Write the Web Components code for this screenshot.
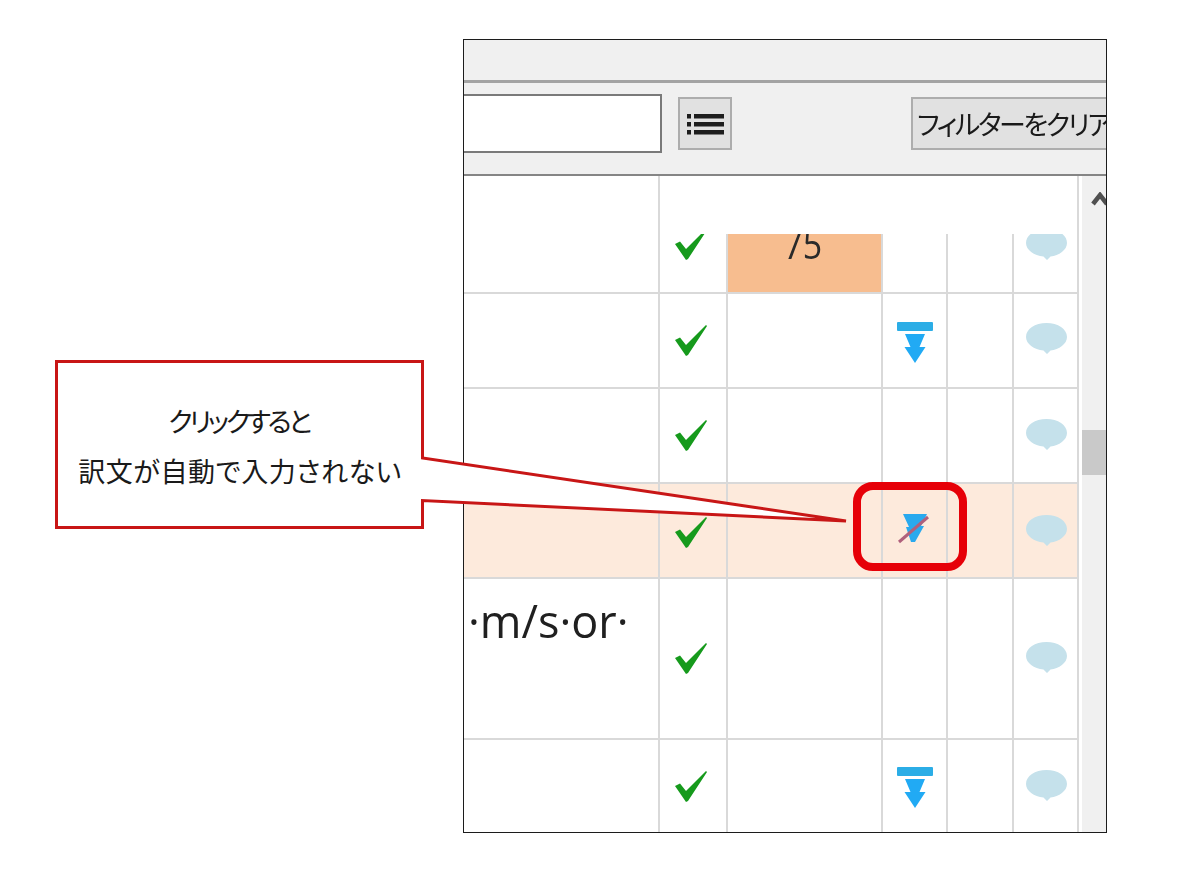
<!DOCTYPE html>
<html lang="ja">
<head>
<meta charset="utf-8">
<title>フィルターをクリア</title>
<style>
  html, body { margin: 0; background: #fff; }
  body { width: 1200px; height: 877px; overflow: hidden; font-family: "Noto Sans CJK JP", sans-serif; }
</style>
</head>
<body>
<annotated-page>
  <app-frame>
    <title-strip></title-strip>
    <tool-bar></tool-bar>
    <segment-grid>
      <segment-row height="60" icon-top="-5" bubble-top="-5" fill="75"></segment-row>
      <segment-row height="95" icon-top="31" bubble-top="29" filter-top="28" filter="bar"></segment-row>
      <segment-row height="95" icon-top="31" bubble-top="30"></segment-row>
      <segment-row height="95" icon-top="33" bubble-top="31" filter-top="30" filter="off" active></segment-row>
      <segment-row height="161" icon-top="64" bubble-top="63" text="·m/s·or·"></segment-row>
      <segment-row height="92" icon-top="31" bubble-top="30" filter-top="27" filter="bar" last></segment-row>
    </segment-grid>
  </app-frame>
  <call-out>
    <span slot="first">クリックすると</span>
    <span slot="second">訳文が自動で入力されない</span>
  </call-out>
  <focus-ring></focus-ring>
</annotated-page>

<script>
// small helper, every element gets an open shadow root from its own markup
class ShadowBase extends HTMLElement {
  constructor() {
    super();
    this.attachShadow({ mode: "open" });
  }
  connectedCallback() {
    this.render();
  }
}

class AnnotatedPage extends ShadowBase {
  render() {
    this.shadowRoot.innerHTML = `
      <style>
        :host { display: block; position: relative; width: 1200px; height: 877px; padding: 39px 0 0 463px; box-sizing: border-box; }
      </style>
      <slot></slot>
    `;
  }
}

class AppFrame extends ShadowBase {
  render() {
    this.shadowRoot.innerHTML = `
      <style>
        :host {
          display: flex; flex-direction: column; width: 644px; height: 794px; box-sizing: border-box;
          border: 1px solid #1c1c1c; overflow: hidden; background: #fff; filter: blur(0.35px);
        }
      </style>
      <slot></slot>
    `;
  }
}

class TitleStrip extends ShadowBase {
  render() {
    this.shadowRoot.innerHTML = `
      <style>
        :host { display: block; flex: none; height: 40px; background: #f0f0f0; border-bottom: 3px solid #a3a3a3; }
      </style>
    `;
  }
}

class ToolBar extends ShadowBase {
  render() {
    this.shadowRoot.innerHTML = `
      <style>
        :host {
          display: flex; flex: none; height: 91px; background: #f0f0f0; border-bottom: 2px solid #858585;
          align-items: flex-start; font-family: "Noto Sans CJK JP", sans-serif;
        }
        .search {
          flex: none; width: 198px; height: 59px; margin-top: 11px; box-sizing: border-box; background: #fff;
          border: 2px solid #7a7a7a; border-left: 0;
        }
        .btn {
          flex: none; margin-top: 14px; height: 53px; box-sizing: border-box; background: #e1e1e1;
          border: 2px solid #adadad; display: flex; align-items: center;
        }
        .list { width: 54px; margin-left: 16px; justify-content: center; }
        .clear {
          width: 240px; margin-left: 179px; padding-left: 4px; border-right: 0;
          font-size: 27px; letter-spacing: -2.4px; color: #1a1a1a; white-space: nowrap; font-feature-settings: "palt";
        }
      </style>
      <div class="search"></div>
      <div class="btn list">
        <svg width="40" height="30" viewBox="0 0 40 30">
          <g fill="#1d1d1d">
            <rect x="2" y="5" width="4" height="4.500"/><rect x="2" y="13" width="4" height="4.500"/><rect x="2" y="21" width="4" height="4.500"/>
            <rect x="9" y="5" width="30" height="4.500"/><rect x="9" y="13" width="30" height="4.500"/><rect x="9" y="21" width="30" height="4.500"/>
          </g>
        </svg>
      </div>
      <div class="btn clear">フィルターをクリア</div>
    `;
  }
}

class SegmentGrid extends ShadowBase {
  render() {
    this.shadowRoot.innerHTML = `
      <style>
        :host { display: flex; flex: 1; min-height: 0; }
        .rows { flex: none; width: 615px; display: flex; flex-direction: column; }
        .head {
          flex: none; height: 58px; display: grid; grid-template-columns: 196px 419px;
        }
        .head div { border-right: 2px solid #d9d9d9; }
        .bar { flex: 1; margin-left: 3px; background: #f0f0f0; display: flex; flex-direction: column; align-items: center; }
        .up { margin-top: 16px; margin-left: 9px; flex: none; }
        .thumb { margin-top: 224px; width: 100%; height: 45px; background: #c9c9c9; }
      </style>
      <div class="rows">
        <div class="head"><div></div><div></div></div>
        <slot></slot>
      </div>
      <div class="bar">
        <svg class="up" width="18" height="14" viewBox="0 0 18 14"><path d="M2 12 L9 3 L16 12" fill="none" stroke="#505050" stroke-width="4.500"/></svg>
        <div class="thumb"></div>
      </div>
    `;
  }
}

const CHECK = `<svg width="32" height="31" viewBox="0 0 32 31"><path d="M0 15 L5 12.500 L11 20 L31 0 L32 1 L13 30 L11 31 Z" fill="#169a1c"/></svg>`;
const BUBBLE = `<svg width="41" height="31" viewBox="0 0 41 31"><path d="M20.500 0 C32 0 41 6 41 14 C41 21 33 26.500 24.500 27.500 L21 31 L17.500 27.500 C8 26.500 0 21 0 14 C0 6 9 0 20.500 0 Z" fill="#c5e1eb"/></svg>`;
const FILTER_BAR = `<svg width="36" height="41" viewBox="0 0 36 41">
  <rect x="0" y="0" width="36" height="9" rx="1" fill="#2bade6"/>
  <path d="M8 12 H28 L22.500 25 H28.500 L18 41 L7.500 25 H13.500 Z" fill="#21aaf4"/></svg>`;
const FILTER_OFF = `<svg width="32" height="30" viewBox="0 0 32 30">
  <path d="M5 0 H29 L23 12 H26 L17 28 H13 L8 13 H11 Z" fill="#29a9ee"/>
  <path d="M1 28 L30 3" stroke="#b0607c" stroke-width="3"/></svg>`;

class SegmentRow extends ShadowBase {
  render() {
    const height = this.getAttribute("height");
    const iconTop = this.getAttribute("icon-top");
    const bubbleTop = this.getAttribute("bubble-top");
    const filterTop = this.getAttribute("filter-top") || 0;
    const filter = this.getAttribute("filter");
    const fill = this.getAttribute("fill");
    const text = this.getAttribute("text") || "";
    this.shadowRoot.innerHTML = `
      <style>
        :host {
          display: grid; flex: none; height: ${height}px; box-sizing: border-box;
          grid-template-columns: 196px 68px 155px 65px 66px 65px;
          border-bottom: ${this.hasAttribute("last") ? 0 : 2}px solid #d9d9d9;
          background: ${this.hasAttribute("active") ? "#fdeadc" : "#fff"};
        }
        .cell { border-right: 2px solid #d9d9d9; overflow: hidden; min-width: 0; display: flex; justify-content: center; align-items: flex-start; }
        svg { display: block; flex: none; }
        .src {
          justify-content: flex-start; padding: 16px 0 0 4px; font: 45px/52px "Open Sans", sans-serif; color: #202020; white-space: nowrap;
        }
        .check svg { margin: ${iconTop}px 4px 0 0; }
        .score { font: 40px/44px "Open Sans", sans-serif; color: #2a2a2a; }
        .score.orange { background: #f7bd8f; }
        .score span { display: block; margin-top: -12px; margin-right: 3px; transform: scaleX(.85); }
        .filter svg { margin: ${filterTop}px 0 0 0; }
        .filter.off svg { margin: ${filterTop}px 0 0 -2px; }
        .note svg { margin: ${bubbleTop}px 0 0 2px; }
      </style>
      <div class="cell src">${text}</div>
      <div class="cell check">${CHECK}</div>
      <div class="cell score ${fill ? "orange" : ""}">${fill ? `<span>${fill}</span>` : ""}</div>
      <div class="cell filter ${filter === "off" ? "off" : ""}">${filter === "bar" ? FILTER_BAR : filter === "off" ? FILTER_OFF : ""}</div>
      <div class="cell"></div>
      <div class="cell note">${BUBBLE}</div>
    `;
  }
}

// callout box with its wedge, lies over the grid
class CallOut extends ShadowBase {
  render() {
    this.shadowRoot.innerHTML = `
      <style>
        :host { position: absolute; left: 55px; top: 360px; width: 795px; height: 170px; display: block; }
        svg { position: absolute; inset: 0; }
        .text {
          position: absolute; left: 1px; top: 1px; width: 368px; height: 167px; box-sizing: border-box; padding-top: 3px;
          display: flex; flex-direction: column; align-items: center; justify-content: center; gap: 12px;
          font-family: "Noto Sans CJK JP", sans-serif; font-weight: 400; color: #1a1a1a; font-feature-settings: "palt";
          line-height: 38px;
        }
        .one { font-size: 27px; letter-spacing: -3.4px; margin-right: 3px; }
        .two { font-size: 27px; letter-spacing: 0.6px; }
      </style>
      <svg width="795" height="170" viewBox="0 0 795 170">
        <path d="M1.500 1.500 H367.500 V98 L791 161 L367.500 140.500 V167.500 H1.500 Z" fill="#fff" stroke="#c81616" stroke-width="3"/>
      </svg>
      <div class="text">
        <div class="one"><slot name="first"></slot></div>
        <div class="two"><slot name="second"></slot></div>
      </div>
    `;
  }
}

class FocusRing extends ShadowBase {
  render() {
    this.shadowRoot.innerHTML = `
      <style>
        :host {
          position: absolute; left: 853px; top: 482px; width: 114px; height: 89px; box-sizing: border-box;
          border: 8px solid #e60008; border-radius: 20px; display: block;
        }
      </style>
    `;
  }
}

customElements.define("annotated-page", AnnotatedPage);
customElements.define("app-frame", AppFrame);
customElements.define("title-strip", TitleStrip);
customElements.define("tool-bar", ToolBar);
customElements.define("segment-grid", SegmentGrid);
customElements.define("segment-row", SegmentRow);
customElements.define("call-out", CallOut);
customElements.define("focus-ring", FocusRing);
</script>
</body>
</html>
